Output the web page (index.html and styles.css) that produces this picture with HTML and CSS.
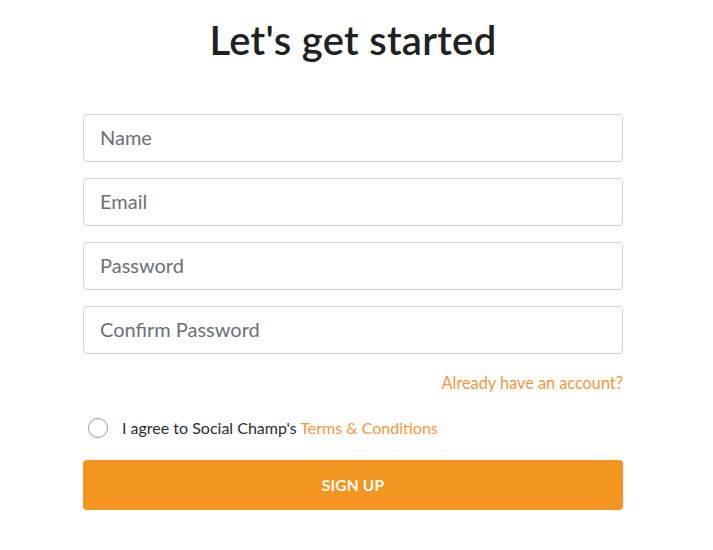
FILE: index.html
```html
<!DOCTYPE html>
<html>
<head>
<meta charset="utf-8">
<link rel="stylesheet" href="styles.css">
</head>
<body>
<div class="wrap">
  <h1 class="title">Let's get started</h1>
  <form class="form">
    <input class="field" type="text" placeholder="Name">
    <input class="field" type="email" placeholder="Email">
    <input class="field" type="password" placeholder="Password">
    <input class="field" type="password" placeholder="Confirm Password">
    <div class="login-row"><a class="link" href="#">Already have an account?</a></div>
    <label class="agree">
      <span class="radio"></span>
      <span class="agree-text">I agree to Social Champ's <a class="link" href="#">Terms &amp; Conditions</a></span>
    </label>
    <button class="btn" type="button">SIGN UP</button>
  </form>
</div>
</body>
</html>
```

FILE: styles.css
```css
* { box-sizing: border-box; }
html, body { margin: 0; padding: 0; background: #fff; }
body { font-family: "Lato", "Open Sans", sans-serif; color: #222; }
.wrap { width: 540px; margin-left: 83px; padding-top: 16px; }
.title { margin: 0; text-align: center; font-size: 40px; font-weight: 600; color: #212121; line-height: 48px; letter-spacing: 0.3px; }
.form { display: flex; flex-direction: column; margin-top: 50px; }
.field { height: 48px; border: 1px solid #d2d4d8; border-radius: 4px; padding: 0 16px 3px; font-family: inherit; font-size: 20px; color: #333; margin-bottom: 16px; outline: none; }
.field::placeholder { color: #6b7078; }
.login-row { display: flex; justify-content: flex-end; height: 24px; align-items: center; }
.login-row .link { font-size: 16.3px; }
.link { color: #f7963d; text-decoration: none; }
.agree { display: flex; align-items: center; margin-top: 22px; padding-left: 5px; height: 22px; }
.radio { width: 20px; height: 20px; border: 1px solid #9a9a9a; border-radius: 50%; margin-right: 14px; flex: none; margin-top: 2px; }
.agree-text { font-size: 16px; color: #2b2b36; }
.btn { margin-top: 22px; height: 50px; border: none; border-radius: 4px; background: #f59521; color: #fff; font-family: inherit; font-size: 15.5px; font-weight: 700; letter-spacing: 0.2px; }
```
